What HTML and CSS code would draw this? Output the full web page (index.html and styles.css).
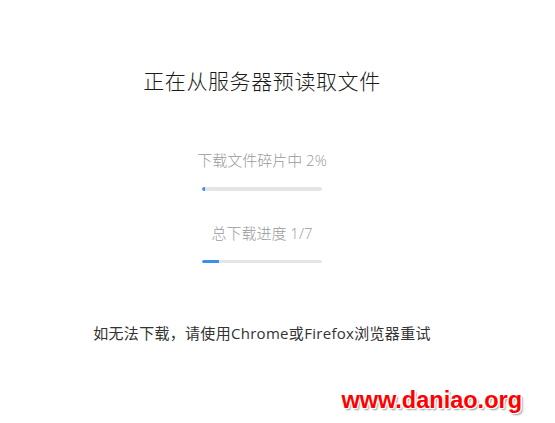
FILE: index.html
```html
<!DOCTYPE html>
<html lang="zh-CN">
<head>
<meta charset="utf-8">
<title>正在从服务器预读取文件</title>
<link rel="stylesheet" href="styles.css">
</head>
<body>
<main class="page">
  <h1 class="title">正在从服务器预读取文件</h1>
  <div class="label label-first">下载文件碎片中 2%</div>
  <div class="bar"><div class="fill" style="width:2%"></div></div>
  <div class="label label-second">总下载进度 1/7</div>
  <div class="bar bar-thin"><div class="fill" style="width:14.2857%"></div></div>
  <p class="note">如无法下载，请使用Chrome或Firefox浏览器重试</p>
</main>
<div class="watermark">www.daniao.org</div>
</body>
</html>
```
FILE: styles.css
```css
html, body {
  margin: 0;
  padding: 0;
  background: #fff;
}
body {
  width: 555px;
  height: 423px;
  position: relative;
  overflow: hidden;
  font-family: "Open Sans", "Noto Sans CJK SC", sans-serif;
}
.page {
  width: 524px;
  padding-top: 64px;
  display: flex;
  flex-direction: column;
  align-items: center;
}
.title {
  margin: 0;
  font-family: "Noto Sans CJK SC", sans-serif;
  font-size: 21px;
  line-height: 32px;
  font-weight: 300;
  color: #1a1a1a;
  letter-spacing: 0.6px;
}
.label {
  font-size: 15px;
  line-height: 20px;
  color: #9a9a9a;
  font-weight: 300;
}
.label-first { margin-top: 54px; }
.label-second { margin-top: 32px; }
.bar {
  margin-top: 17px;
  width: 120px;
  height: 4px;
  border-radius: 2px;
  background: #e5e5e5;
  overflow: hidden;
}
.bar-thin { height: 3px; }
.fill {
  min-width: 3px;
  height: 100%;
  background: #3b8ff3;
  border-radius: 2px 0 0 2px;
}
.note {
  margin: 60px 0 0;
  font-size: 15px;
  line-height: 20px;
  color: #333;
  letter-spacing: 0.3px;
}
.watermark {
  position: absolute;
  right: 33px;
  top: 388px;
  font-family: "Liberation Sans", Arial, sans-serif;
  font-weight: 700;
  font-size: 23.5px;
  line-height: 24px;
  color: #f00;
  text-shadow:
    1px 0 0 #fff, -1px 0 0 #fff, 0 1px 0 #fff, 0 -1px 0 #fff,
    1px 1px 0 #fff, -1px -1px 0 #fff, 1px -1px 0 #fff, -1px 1px 0 #fff,
    2px 2px 2px #999;
}
```
